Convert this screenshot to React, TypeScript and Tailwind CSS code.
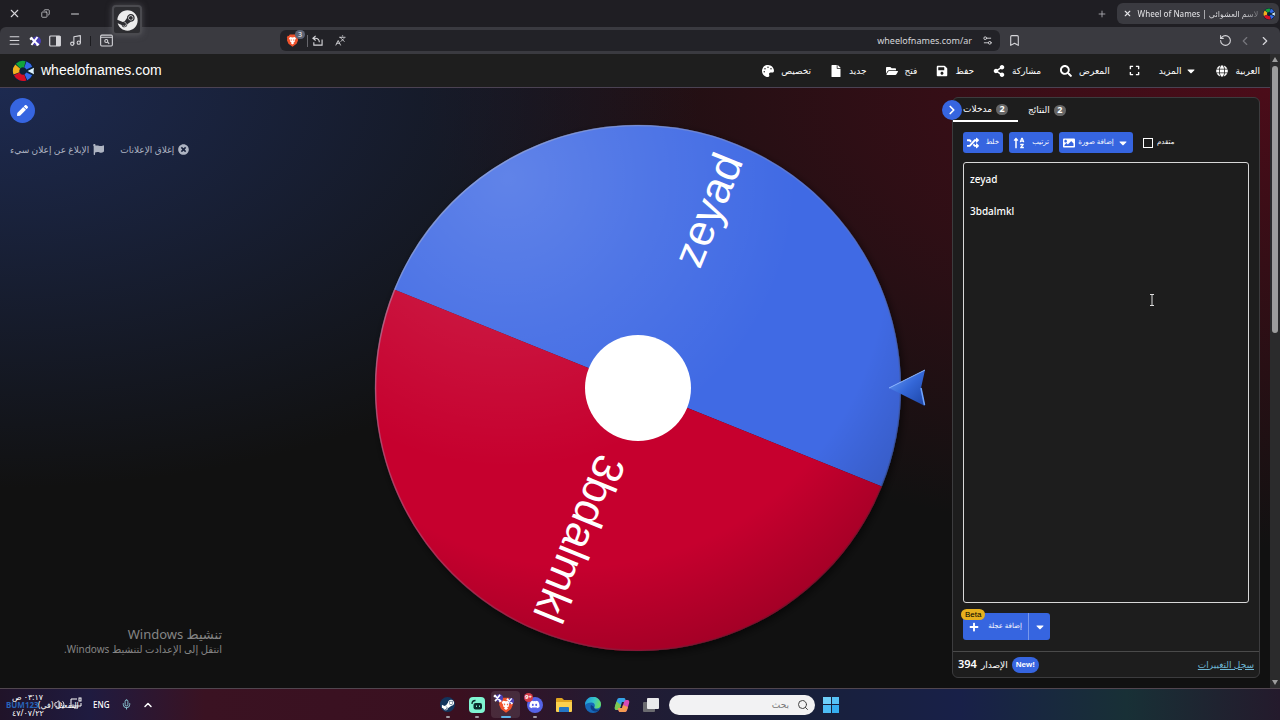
import React from "react";
import {
  FaPalette, FaFile, FaFolderOpen, FaSave, FaShareAlt, FaSearch, FaExpand, FaGlobe,
  FaCaretDown, FaRandom, FaSortAlphaUp, FaImage, FaFlag, FaTimesCircle, FaPen,
  FaSteam, FaSteamSymbol, FaDiscord, FaPlus,
} from "react-icons/fa";
import {
  X, Minus, Copy, Menu, Music, Bookmark, RotateCcw, ChevronLeft, ChevronRight,
  Plus, ChevronUp, Mic, Search, Languages, Settings2, Volume2,
} from "lucide-react";

const iconBtn = "flex items-center justify-center text-[#d6d6da]";
const latin = "[font-family:'Liberation_Sans','DejaVu_Sans',sans-serif]";

function WheelLogo({ className }: { className: string }) {
  const cuts = [
    ["#f2b01e", 160, 220], ["#12a53b", 225, 285], ["#3369e8", 290, 335],
    ["#3369e8", 25, 65], ["#d50f25", 70, 155],
  ] as const;
  const pt = (r: number, a: number) =>
    `${(12 + r * Math.cos((a * Math.PI) / 180)).toFixed(2)} ${(12 + r * Math.sin((a * Math.PI) / 180)).toFixed(2)}`;
  return (
    <svg viewBox="0 0 24 24" className={className} aria-hidden="true">
      <circle cx="12" cy="12" r="12" fill="#0c2238" />
      {cuts.map(([c, a, b]) => (
        <path key={a} fill={c} d={`M${pt(11, a)}A11 11 0 0 1 ${pt(11, b)}L${pt(4, b)}A4 4 0 0 0 ${pt(4, a)}Z`} />
      ))}
      <path d="M17 12 L24 8.500 L23.500 12 L24 15.500Z" fill="#dff3fb" />
    </svg>
  );
}

function BraveIcon({ className }: { className: string }) {
  return (
    <svg viewBox="0 0 24 24" className={className} aria-hidden="true">
      <path d="M7 1h10l2 2.500 2-.3 1.500 3.500-.8 2 .6 3L19.500 18 12 23.500 4.500 18 1.700 11.700l.6-3-.8-2L3 3.200l2 .3Z" fill="#f0532d" />
      <path d="M12 6.500 16.500 5.700l2 3-2.500 3 .5 2.300-3 1.600 1.700 1.200L12 19.500l-3.200-2.700 1.700-1.200-3-1.600.5-2.300-2.500-3 2-3Z" fill="#fff" />
      <path d="m8.500 9.500 2.500 1-1 2.500ZM15.500 9.500l-2.500 1 1 2.500Z" fill="#f0532d" />
    </svg>
  );
}

function XBadge({ className }: { className: string }) {
  return (
    <svg viewBox="0 0 24 24" className={className} aria-hidden="true">
      <circle cx="15" cy="12" r="9" fill="#4a3fb5" />
      <path d="M3 5 19 20M17 4 5 20M2 9l5-4M15 21l5-3" stroke="#fff" strokeWidth="4" fill="none" />
    </svg>
  );
}

function Titlebar() {
  return (
    <div className="relative flex h-[27px] items-center bg-[#1f1e23] pl-2">
      <div className="flex flex-1 items-center gap-[18px]">
        <button aria-label="Close" className={iconBtn}><X className="size-[13px]" strokeWidth={2} /></button>
        <button aria-label="Restore" className={`${iconBtn} size-3`}><Copy className="size-[9px] -scale-x-100" strokeWidth={2} /></button>
        <button aria-label="Minimize" className={iconBtn}><Minus className="size-3" strokeWidth={2} /></button>
      </div>
      <button aria-label="New tab" className="mr-2.5 text-[#b5b5ba]"><Plus className="size-[10px]" /></button>
      <div className="mr-px flex h-[21px] w-[162px] items-center gap-1 rounded-md bg-[#3a3a40] px-1 text-[#e4e4e7]">
        <button aria-label="Close tab" className="flex size-3 items-center justify-center"><X className="size-[9px]" strokeWidth={3} /></button>
        <span dir="ltr" className="flex-1 whitespace-nowrap bg-linear-to-r from-[#e4e4e7] from-85% to-[#77777c] bg-clip-text text-center text-[8px] font-medium text-transparent">
          Wheel of Names | <bdi>لاسم العشوائي</bdi>
        </span>
        <WheelLogo className="size-3" />
      </div>
      <div className="absolute left-[112px] top-[5px] z-10 flex size-[30px] items-center justify-center rounded border-2 border-[#4a4a4f] bg-[#2d2d31] shadow-[0_0_6px_rgba(120,120,125,0.5)]">
        <FaSteam className="size-[21px] text-[#ececec]" />
      </div>
    </div>
  );
}

function Toolbar() {
  return (
    <div className="bg-[#1f1e23]">
      <div className="flex h-[27px] items-center rounded-t-md bg-[#3a3a40] px-2 text-[#d6d6da]">
        <div className="flex flex-1 items-center gap-2">
          <button aria-label="Menu"><Menu className="size-[13px]" /></button>
          <button aria-label="Extension"><XBadge className="size-3" /></button>
          <button aria-label="Sidebar">
            <svg viewBox="0 0 12 12" className="size-3"><rect x="0.700" y="1" width="10.600" height="10" rx="1" fill="none" stroke="currentColor" strokeWidth="1.200" /><rect x="7" y="1" width="4.500" height="10" fill="currentColor" /></svg>
          </button>
          <button aria-label="Music"><Music className="size-[13px]" /></button>
          <span className="h-2.5 w-px bg-[#1c1c20]" />
          <button aria-label="Search tabs" className="ml-px">
            <svg viewBox="0 0 12 12" className="size-[13px]" fill="none" stroke="currentColor"><rect x="0.600" y="1" width="10.800" height="10" rx="1" /><path d="M.6 3h10.800M7 7.500l1.500 1.500" /><circle cx="5.800" cy="6.400" r="1.400" /></svg>
          </button>
        </div>
        <div className="flex h-[21px] w-[720px] items-center rounded-md bg-[#222227] px-1.5">
          <span className="relative">
            <BraveIcon className="size-[13px]" />
            <span className="absolute -right-1.5 -top-1 rounded-full bg-[#5d6374] px-[3px] text-[7px] leading-[9px] text-white">3</span>
          </span>
          <span className="ml-2 h-3 w-px bg-[#66666c]" />
          <button aria-label="Share" className="ml-1">
            <svg viewBox="0 0 12 12" className="size-[11px]" fill="none" stroke="currentColor" strokeWidth="1.200"><path d="M4 1 1 3.500 4 6M1 3.500h2.500C6.500 3.500 8 5.500 8 8M2 8v3h9V5" /></svg>
          </button>
          <button aria-label="Translate" className="ml-3"><Languages className="size-[11px] -scale-x-100" /></button>
          <span className="flex-1 text-right text-[9px]">wheelofnames.com/ar</span>
          <button aria-label="Site settings" className="ml-2.5 mr-px"><Settings2 className="size-[11px]" /></button>
        </div>
        <div className="flex flex-1 items-center">
          <button aria-label="Bookmark" className="ml-2"><Bookmark className="size-[13px]" /></button>
          <span className="flex-1" />
          <button aria-label="Reload"><RotateCcw className="size-[13px]" /></button>
          <button aria-label="Back" className="ml-1.5 text-[#77777d]"><ChevronLeft className="size-[14px]" /></button>
          <button aria-label="Forward" className="ml-1.5"><ChevronRight className="size-[14px]" /></button>
        </div>
      </div>
    </div>
  );
}

const menu = [
  { icon: FaPalette, label: "تخصيص" },
  { icon: FaFile, label: "جديد" },
  { icon: FaFolderOpen, label: "فتح" },
  { icon: FaSave, label: "حفظ" },
  { icon: FaShareAlt, label: "مشاركة" },
  { icon: FaSearch, label: "المعرض" },
];

function SiteHeader() {
  return (
    <header className="flex h-[33px] items-center bg-[#1e1e1e] pl-3 pr-2.5 text-white">
      <a href="#home" className={`${latin} flex items-center gap-[7px] text-[14px]`}>
        <WheelLogo className="size-[22px]" />
        wheelofnames.com
      </a>
      <nav className="ml-auto flex items-center gap-[19px] whitespace-nowrap text-[9px]">
        {menu.map(({ icon: Icon, label }) => (
          <button key={label} className="flex items-center gap-[7px]">
            <Icon className="size-3" />
            {label}
          </button>
        ))}
        <button aria-label="ملء الشاشة"><FaExpand className="size-[11px]" /></button>
        <button className="flex items-center gap-1">المزيد<FaCaretDown className="size-3" /></button>
        <button className="flex items-center gap-[7px]"><FaGlobe className="size-3" />العربية</button>
      </nav>
    </header>
  );
}

function Wheel() {
  return (
    <svg viewBox="-300 -300 600 600" className="w-full max-w-[600px]" role="img" aria-label="zeyad, 3bdalmkl">
      <defs>
        <radialGradient id="gloss" gradientUnits="userSpaceOnUse" cx="-130" cy="-210" r="290">
          <stop offset="0" stopColor="#fff" stopOpacity="0.170" />
          <stop offset="0.500" stopColor="#fff" stopOpacity="0.080" />
          <stop offset="1" stopColor="#fff" stopOpacity="0" />
        </radialGradient>
        <radialGradient id="shade" gradientUnits="userSpaceOnUse" cx="-60" cy="-130" r="410">
          <stop offset="0.750" stopColor="#000" stopOpacity="0" />
          <stop offset="1" stopColor="#000" stopOpacity="0.180" />
        </radialGradient>
        <linearGradient id="rim" x1="0" y1="0" x2="1" y2="1">
          <stop offset="0" stopColor="#b9c3dc" stopOpacity="0.600" />
          <stop offset="0.500" stopColor="#8888aa" stopOpacity="0.300" />
          <stop offset="1" stopColor="#000" stopOpacity="0.300" />
        </linearGradient>
        <linearGradient id="arrow" x1="0" y1="0" x2="1" y2="1">
          <stop offset="0" stopColor="#6fa0f5" />
          <stop offset="0.500" stopColor="#3467d8" />
          <stop offset="1" stopColor="#1d45a5" />
        </linearGradient>
        <filter id="drop" x="-10%" y="-10%" width="120%" height="120%">
          <feDropShadow dx="2" dy="3" stdDeviation="4" floodColor="#000" floodOpacity="0.600" />
        </filter>
      </defs>
      <g filter="url(#drop)">
        <g transform="rotate(22)">
          <path d="M-263 0A263 263 0 0 1 263 0Z" fill="#3f6be4" />
          <path d="M-263 0A263 263 0 0 0 263 0Z" fill="#c6002f" />
        </g>
      </g>
      <circle r="263" fill="url(#gloss)" />
      <circle r="263" fill="url(#shade)" />
      <circle r="262.500" fill="none" stroke="url(#rim)" strokeWidth="1.500" />
      <g className={`${latin} text-[44px]`} fill="#fff" textAnchor="end">
        <text transform="rotate(-68)" x="250" y="13">zeyad</text>
        <text transform="rotate(112)" x="250" y="13">3bdalmkl</text>
      </g>
      <circle r="53" fill="#fff" />
      <path d="M251 0 287-18 283 0 287 18Z" fill="url(#arrow)" />
      <path d="M251 0 287-18" stroke="#8fb8ff" strokeWidth="1" />
      <path d="M283 0 286.500 17" stroke="#6fa4ff" strokeWidth="1.500" />
    </svg>
  );
}

function Badge({ children }: { children: React.ReactNode }) {
  return <span className="flex h-[11px] w-3 items-center justify-center rounded-full bg-[#666] text-[9px] font-bold text-white">{children}</span>;
}

const blueBtn = "flex items-center rounded-[3px] bg-[#3665e0] text-[7px] font-medium text-white";

function Panel() {
  return (
    <aside className="relative mt-[9px] flex w-[308px] shrink-0 flex-col self-stretch rounded-md border border-[#3c3c3e] bg-[#1d1d1d] text-white">
      <button aria-label="إخفاء" className="absolute -left-[11px] top-0.5 z-10 flex size-5 items-center justify-center rounded-full bg-[#3665e0]">
        <ChevronRight className="size-[14px]" strokeWidth={3} />
      </button>
      <div role="tablist" className="flex h-6 text-[9px]">
        <button role="tab" aria-selected="true" className="flex w-[65px] items-center justify-end gap-1 border-b-2 border-white pr-2.5">مدخلات<Badge>2</Badge></button>
        <button role="tab" aria-selected="false" className="flex items-center gap-1 px-2.5">النتائج<Badge>2</Badge></button>
      </div>
      <div className="flex flex-1 flex-col px-2.5 pt-2.5">
        <div className="flex h-[21px] items-stretch gap-1.5 whitespace-nowrap">
          <button className={`${blueBtn} w-10 justify-between px-1`}><FaRandom className="size-3 shrink-0" />خلط</button>
          <button className={`${blueBtn} w-11 justify-between px-1`}><FaSortAlphaUp className="size-3 shrink-0" />ترتيب</button>
          <button className={`${blueBtn} w-[74px] justify-between px-1`}><FaImage className="size-3 shrink-0" />إضافة صورة<FaCaretDown className="size-3 shrink-0" /></button>
          <label className="ml-1 flex items-center gap-1 text-[7px]">
            <input type="checkbox" className="size-2.5 appearance-none border border-white" />
            متقدم
          </label>
        </div>
        <textarea
          aria-label="مدخلات"
          defaultValue={"zeyad\n\n3bdalmkl"}
          className="mt-[9px] block min-h-[300px] w-full flex-1 resize-none rounded-[3px] border border-[#d8d8d8] bg-[#1d1d1d] px-1.5 py-2 text-[10px] font-medium leading-4 text-white"
        />
        <div className="relative mb-[11px] mt-2.5 flex h-[27px] w-[87px]">
          <button className={`${blueBtn} flex-1 justify-between whitespace-nowrap rounded-r-none px-1.5`}><FaPlus className="size-2.5 shrink-0" />إضافة عجلة</button>
          <button aria-label="المزيد" className={`${blueBtn} w-[22px] justify-center rounded-l-none border-l border-[#7898ec]`}><FaCaretDown className="size-3" /></button>
          <span className={`${latin} absolute -left-0.5 -top-1 flex h-[11px] items-center rounded-full bg-[#e6b01e] px-1 text-[8px] text-black`}>Beta</span>
        </div>
      </div>
      <footer className="flex h-[26px] items-center gap-1 border-t border-[#4a4a4a] px-[5px] text-[9px]">
        <span dir="rtl" className="flex items-baseline gap-1">الإصدار <b className="text-[11px] font-semibold">394</b></span>
        <span className={`${latin} flex h-4 items-center rounded-full bg-[#3665e0] px-1 text-[8px] font-bold`}>New!</span>
        <a href="#changelog" className="ml-auto text-[#6db5d3] underline">سجل التغييرات</a>
      </footer>
    </aside>
  );
}

function Main() {
  return (
    <main className="flex flex-1 border-t border-[#4b4253] bg-[#111]">
      <div className="flex flex-1 bg-[radial-gradient(ellipse_700px_400px_at_0%_0%,#1d2a50,transparent),radial-gradient(ellipse_850px_460px_at_100%_0%,#4b0c19,transparent)] pr-2.5">
        <section className="flex w-[324px] shrink-0 flex-col items-start justify-between pb-8 pl-2.5 pt-2.5">
          <div className="flex flex-col gap-5">
            <button aria-label="تحرير" className="flex size-[25px] items-center justify-center rounded-full bg-[#3665e0] text-white"><FaPen className="size-[11px]" /></button>
            <div className="flex items-center gap-4 whitespace-nowrap text-[9px] text-[#aeb4c2]">
              <button className="flex items-center gap-1">الإبلاغ عن إعلان سيء<FaFlag className="size-[11px]" /></button>
              <button className="flex items-center gap-1">إغلاق الإعلانات<FaTimesCircle className="size-[11px]" /></button>
            </div>
          </div>
          <div dir="rtl" className="w-[212px] whitespace-nowrap text-[#858585]">
            <p className="text-[13px] leading-4">تنشيط Windows</p>
            <p className="text-[10px] leading-[14px]">انتقل إلى الإعدادت لتنشيط Windows.</p>
          </div>
        </section>
        <section className="relative flex min-w-0 flex-1 items-center justify-center">
          <Wheel />
        </section>
        <div className="flex pb-2.5"><Panel /></div>
      </div>
    </main>
  );
}

function Scrollbar() {
  return (
    <div aria-hidden="true" className="flex w-2.5 flex-col items-center justify-between bg-[#2b2b2c] py-[3px] text-[#9d9d9d]">
      <svg viewBox="0 0 6 5" className="h-[5px] w-1.5"><path d="M3 0 6 5H0Z" fill="currentColor" /></svg>
      <div className="mt-1 h-[267px] w-1.5 rounded-full bg-[#9d9d9d]" />
      <span className="flex-1" />
      <svg viewBox="0 0 6 5" className="h-[5px] w-1.5"><path d="M3 5 6 0H0Z" fill="currentColor" /></svg>
    </div>
  );
}

function AppIcon({ label, running, active, children }: { label: string; running?: boolean; active?: boolean; children: React.ReactNode }) {
  return (
    <button aria-label={label} className={`relative flex h-[27px] w-[29px] items-center justify-center rounded ${active ? "bg-white/10" : ""}`}>
      {children}
      {running && <span className={`absolute bottom-0 h-0.5 rounded-full ${active ? "w-2.5 bg-[#5fb4e8]" : "w-1 bg-[#a09aa2]"}`} />}
    </button>
  );
}

function Taskbar() {
  return (
    <div className="flex h-8 items-center border-t border-[#51464f] bg-[#20182c] text-white">
      <div className="flex h-full w-full items-center bg-[linear-gradient(90deg,#201329,#1f1b40_7%,#3a1222_16%,#3a1020_36%,#221b33_48%,#18203a_62%,#182048_75%,#183036_88%,#241a2c_100%)]">
        <div className="relative flex h-full flex-1 items-center">
          <div className="absolute left-1.5 top-0.5 h-7 w-20 text-[8px]">
            <span dir="rtl" className="absolute left-1.5 top-0 whitespace-nowrap leading-3">٠٣:١٧ ص</span>
            <span className="absolute left-1.5 top-4 whitespace-nowrap leading-3">٤٧/٠٧/٢٢</span>
            <span dir="rtl" className="absolute left-8 top-2 whitespace-nowrap leading-3">التفعيل (في)</span>
            <span className="absolute left-0 top-2 font-bold leading-3 text-[#2763b8]">BUM123</span>
            <Volume2 className="absolute left-12 top-2 size-[11px]" />
            <svg viewBox="0 0 12 12" className="absolute left-16 top-1.5 size-3" fill="none" stroke="currentColor"><path d="M7 2H1v7h10V6M4 11h4" /><rect x="9" y="1" width="2" height="3" /></svg>
          </div>
          <span className="ml-[93px] text-[8px] font-medium">ENG</span>
          <Mic className="ml-3 size-[11px] text-[#8fd0dc]" />
          <ChevronUp className="ml-2.5 size-3" strokeWidth={3} />
        </div>
        <div className="flex items-center pr-2">
          <AppIcon label="Steam" running>
            <span className="flex size-[15px] items-center justify-center rounded-full bg-[#12345c]"><FaSteamSymbol className="size-[14px]" /></span>
          </AppIcon>
          <AppIcon label="Streamlabs" running>
            <svg viewBox="0 0 16 16" className="size-4"><rect width="16" height="16" rx="4" fill="#80f5d2" /><rect x="4.500" y="6" width="8.500" height="6.500" rx="2" fill="#0b2a2c" /><path d="M3 7q0-3.500 3.500-3.500" fill="none" stroke="#0b2a2c" strokeWidth="1.300" /><path d="M7.500 8.500v1.500M10.500 8.500v1.500" stroke="#80f5d2" /></svg>
          </AppIcon>
          <AppIcon label="Brave" running active>
            <BraveIcon className="size-4" />
            <XBadge className="absolute left-0.5 top-0.5 size-2.5" />
            <XBadge className="absolute right-1.5 top-1.5 size-2" />
          </AppIcon>
          <AppIcon label="Discord" running>
            <span className="flex size-4 items-center justify-center rounded-full bg-[#5563e8]"><FaDiscord className="size-[11px]" /></span>
            <span className="absolute left-1 top-0.5 flex size-[9px] items-center justify-center rounded-full bg-[#d33c4a] text-[6px] font-bold">9+</span>
          </AppIcon>
          <AppIcon label="Explorer">
            <svg viewBox="0 0 18 16" className="h-4 w-[18px]"><path d="M1 2q0-1 1-1h5l2 2h8v4H1Z" fill="#e0a520" /><path d="M1 5h16v9q0 1-1 1H2q-1 0-1-1Z" fill="#fbd04e" /><path d="M4 15v-4q0-1 1-1h8q1 0 1 1v4Z" fill="#2476c4" /></svg>
          </AppIcon>
          <AppIcon label="Edge">
            <svg viewBox="0 0 16 16" className="size-4">
              <defs><linearGradient id="edge" x1="0" x2="1" y2="0.300"><stop stopColor="#1c8fdd" /><stop offset="0.600" stopColor="#36c5c9" /><stop offset="1" stopColor="#67dc6b" /></linearGradient></defs>
              <circle cx="8" cy="8" r="8" fill="#1668b8" />
              <path d="M0 8a8 8 0 0 1 16-.5c0 2.500-2 4-4.500 4-1.500 0-2.500-.6-2-1.500C10.500 7.500 9 5.500 6.500 5.500 3.500 5.500 1 6.500 0 8Z" fill="url(#edge)" />
              <path d="M6 8c-1.500 3 1 6.500 4.500 6.500 2 0 3.500-1 4-2-3 1-6-.5-5.800-3Z" fill="#0d3f86" />
            </svg>
          </AppIcon>
          <AppIcon label="Copilot">
            <svg viewBox="0 0 16 16" className="size-4">
              <path d="M5 1h5q1 0 1.300 1L12 5H8L6 11q-.5 2-2 2H2.500Q0 13 1 9.500L3 3q.6-2 2-2Z" fill="#35a4e8" />
              <path d="M1 9 2.500 4.500 7 8 6 11q-.5 2-2 2H2.500Q0 13 1 9Z" fill="#7fc850" />
              <path d="M11 15H6q-1 0-1.300-1L4 11h4l2-6q.5-2 2-2h1.500q2.500 0 1.500 3.500L13 13q-.6 2-2 2Z" fill="#d74ab5" />
              <path d="M11 15H6q-1 0-1.300-1L4 11h4l1-3 5 2-1 3q-.6 2-2 2Z" fill="#f49a50" />
            </svg>
          </AppIcon>
          <AppIcon label="Task view">
            <svg viewBox="0 0 16 16" className="size-4"><rect x="0" y="5" width="12" height="10" rx="1" fill="#6b6b70" /><rect x="4" y="1" width="12" height="11" rx="1" fill="#e9e9eb" /></svg>
          </AppIcon>
          <label dir="rtl" className="ml-1 flex h-5 w-[146px] items-center gap-2 rounded-full bg-[#f2f2f3] px-1.5 text-[#444]">
            <Search className="size-3" />
            <input type="search" aria-label="بحث" placeholder="بحث" className="min-w-0 flex-1 bg-transparent text-[9px] placeholder:text-[#777]" />
          </label>
          <button aria-label="Start" className="ml-2 grid size-4 grid-cols-2 gap-px">
            <span className="size-full bg-[#6fd0fa]" /><span className="size-full bg-[#56c2f6]" />
            <span className="size-full bg-[#4dbdf5]" /><span className="size-full bg-[#35aef0]" />
          </button>
        </div>
        <div className="flex-1" />
      </div>
    </div>
  );
}

export default function App() {
  return (
    <div dir="ltr" className="flex min-h-screen flex-col bg-[#111] [font-family:'Noto_Sans','DejaVu_Sans',sans-serif]">
      <Titlebar />
      <Toolbar />
      <div className="flex flex-1">
        <div className="flex min-w-0 flex-1 flex-col">
          <SiteHeader />
          <Main />
        </div>
        <Scrollbar />
      </div>
      <Taskbar />
      <svg viewBox="0 0 6 12" className="pointer-events-none absolute left-[1149px] top-[294px] h-3 w-1.5" fill="none" stroke="#ddd"><path d="M1 .5h4M3 .5v11M1 11.500h4" /></svg>
    </div>
  );
}
